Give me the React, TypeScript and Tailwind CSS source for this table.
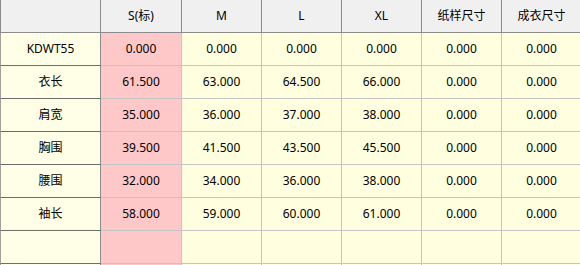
import { Fragment } from "react";

const headers = ["S(标)", "M", "L", "XL", "纸样尺寸", "成衣尺寸"];

const rows: { name: string; values: string[] }[] = [
  { name: "KDWT55", values: ["0.000", "0.000", "0.000", "0.000", "0.000", "0.000"] },
  { name: "衣长", values: ["61.500", "63.000", "64.500", "66.000", "0.000", "0.000"] },
  { name: "肩宽", values: ["35.000", "36.000", "37.000", "38.000", "0.000", "0.000"] },
  { name: "胸围", values: ["39.500", "41.500", "43.500", "45.500", "0.000", "0.000"] },
  { name: "腰围", values: ["32.000", "34.000", "36.000", "38.000", "0.000", "0.000"] },
  { name: "袖长", values: ["58.000", "59.000", "60.000", "61.000", "0.000", "0.000"] },
  { name: "", values: ["", "", "", "", "", ""] },
  { name: "", values: ["", "", "", "", "", ""] },
];

export default function App() {
  return (
    <div
      className="h-[265px] w-[580px] overflow-hidden bg-white text-[12px] text-black"
      style={{ fontFamily: '"Noto Sans", "Noto Sans CJK SC", sans-serif' }}
    >
      <div className="grid w-[582px] grid-cols-[101px_81px_80px_80px_80px_80px_80px] auto-rows-[33px]">
        <div className="border-b border-l border-r border-[#8c8c8c] bg-[#f0f0f0]" />
        {headers.map((h) => (
          <div
            key={h}
            className="flex items-center justify-center border-b border-r border-[#8c8c8c] bg-[#f0f0f0]"
          >
            {h}
          </div>
        ))}
        {rows.map((row, i) => (
          <Fragment key={i}>
            <div className="flex items-center justify-center border-b border-l border-r border-b-[#6e6e6e] border-l-[#a0a0a0] border-r-[#8c8c8c] bg-[#ffffe8]">
              {row.name}
            </div>
            {row.values.map((v, j) => (
              <div
                key={j}
                className={`flex items-center justify-center border-b border-r border-[#c4c4c4] ${
                  j === 0 ? "bg-[#ffc8c8]" : "bg-[#ffffe0]"
                }`}
              >
                {v}
              </div>
            ))}
          </Fragment>
        ))}
      </div>
    </div>
  );
}
